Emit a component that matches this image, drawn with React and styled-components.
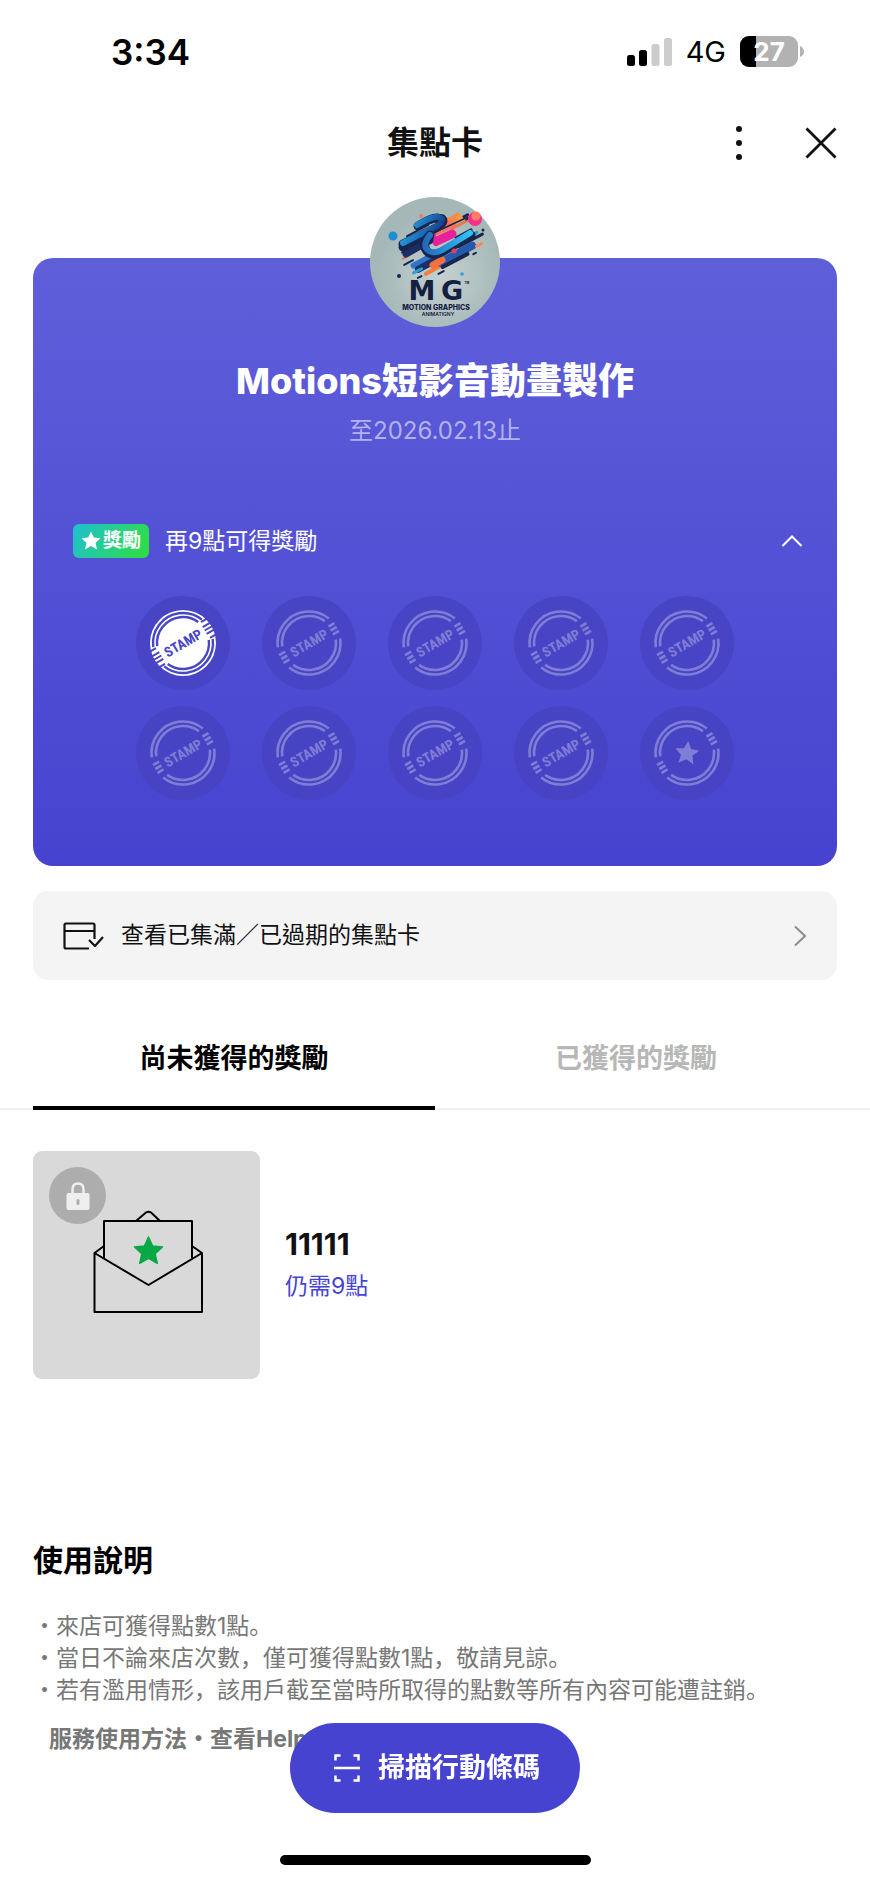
import React, { useState } from 'react';
import styled, { createGlobalStyle } from 'styled-components';

const GlobalStyle = createGlobalStyle`
  * {
    box-sizing: border-box;
  }

  body {
    margin: 0;
    background: #fff;
    color: #111;
    font-family: Inter, "Noto Sans CJK TC", sans-serif;
    line-height: 1.2;
  }

  button {
    border: 0;
    padding: 0;
    background: none;
    color: inherit;
    font: inherit;
    cursor: pointer;
  }

  svg {
    display: block;
    flex: none;
  }
`;

const Page = styled.div`
  padding-bottom: 128px;
`;

const StatusBar = styled.div`
  display: flex;
  align-items: center;
  justify-content: space-between;
  height: 104px;
  padding: 0 66px 0 111px;
`;

const Clock = styled.span`
  color: #000;
  font-size: 35px;
  font-weight: 600;
`;

const StatusIcons = styled.div`
  display: flex;
  align-items: center;
  gap: 14px;
  color: #000;
  font-size: 29px;
`;

const Header = styled.header`
  display: grid;
  grid-template-columns: 1fr auto 1fr;
  align-items: center;
  height: 77px;
  padding: 0 33px;
`;

const HeaderTitle = styled.h1`
  grid-column: 2;
  margin: 0;
  font-size: 32px;
  font-weight: 700;
  line-height: 40px;
`;

const HeaderActions = styled.div`
  display: flex;
  align-items: center;
  justify-content: flex-end;
  gap: 62px;
`;

const Card = styled.section`
  display: flex;
  flex-direction: column;
  align-items: center;
  margin: 77px 33px 0;
  padding: 0 34px 66px 40px;
  border-radius: 20px;
  background: linear-gradient(#5f5fda, #4643d0);
  color: #fff;
`;

const Avatar = styled.svg`
  width: 130px;
  height: 130px;
  margin: -61px 0 31px -6px;
`;

const ShopName = styled.h2`
  margin: 0 0 0 -6px;
  font-size: 36px;
  font-weight: 800;
  line-height: 46px;
`;

const Expiry = styled.p`
  margin: 11px 0 0 -6px;
  color: #b3b2ee;
  font-size: 24px;
  line-height: 32px;
`;

const RewardToggle = styled.button`
  display: flex;
  align-items: center;
  width: 100%;
  margin: 77px 0 38px;
  font-size: 23px;
  line-height: 34px;
`;

const Badge = styled.span`
  display: flex;
  align-items: center;
  gap: 2px;
  height: 34px;
  margin-right: 16px;
  padding: 0 8px;
  border-radius: 6px;
  background: linear-gradient(120deg, #20bfd2, #2ee03c);
  font-size: 19px;
  font-weight: 700;
`;

const ToggleArrow = styled.svg`
  margin-left: auto;
`;

const StampGrid = styled.div`
  display: grid;
  grid-template-columns: repeat(5, 94px);
  gap: 16px 32px;
  margin-left: -6px;
`;

const StampSlot = styled.svg`
  width: 94px;
  height: 94px;
`;

const HistoryLink = styled.a`
  display: flex;
  align-items: center;
  height: 89px;
  margin: 25px 33px 0;
  padding: 0 30px;
  border-radius: 15px;
  background: #f4f4f4;
  color: #111;
  font-size: 23px;
  text-decoration: none;

  svg:last-child {
    margin-left: auto;
  }
`;

const HistoryText = styled.span`
  margin-left: 16px;
`;

const Tabs = styled.div`
  display: flex;
  margin-top: 48px;
  padding: 0 33px;
  box-shadow: inset 0 -2px #efefef;
`;

const Tab = styled.button`
  flex: 1;
  height: 82px;
  padding-bottom: 16px;
  border-bottom: 4px solid ${({ $active }) => ($active ? '#000' : 'transparent')};
  color: ${({ $active }) => ($active ? '#000' : '#b7b7b7')};
  font-size: 27px;
  font-weight: 700;
`;

const RewardRow = styled.section`
  display: flex;
  align-items: center;
  gap: 25px;
  margin: 41px 33px 0;
`;

const Thumb = styled.div`
  position: relative;
  display: flex;
  align-items: center;
  justify-content: center;
  width: 227px;
  height: 228px;
  padding: 0 0 6px 4px;
  border-radius: 9px;
  background: #d9d9d9;
`;

const LockBadge = styled.span`
  position: absolute;
  top: 16px;
  left: 16px;
  display: flex;
  align-items: center;
  justify-content: center;
  width: 57px;
  height: 57px;
  border-radius: 50%;
  background: #adadad;
`;

const RewardName = styled.h3`
  margin: 0 0 8px;
  font-size: 30px;
  font-weight: 700;
  line-height: 34px;
`;

const RewardNeed = styled.p`
  margin: 0;
  color: #4643d0;
  font-size: 23px;
  line-height: 34px;
`;

const Guide = styled.section`
  margin: 160px 33px 0;
  color: #777;
  font-size: 23px;
`;

const GuideTitle = styled.h2`
  margin: 0 0 29px;
  color: #000;
  font-size: 30px;
  font-weight: 700;
  line-height: 42px;
`;

const GuideList = styled.ul`
  margin: 0;
  padding: 0;
  list-style: none;
  font-family: Inter, "Noto Sans CJK SC", sans-serif;
  line-height: 32px;
`;

const HelpLink = styled.a`
  display: inline-block;
  margin: 16px 0 0 16px;
  color: #777;
  font-weight: 700;
  line-height: 34px;
  text-decoration: none;
`;

const BottomBar = styled.div`
  position: fixed;
  right: 0;
  bottom: 0;
  left: 0;
  display: flex;
  flex-direction: column;
  align-items: center;
  gap: 42px;
  padding-bottom: 17px;
`;

const ScanButton = styled.button`
  display: flex;
  align-items: center;
  gap: 18px;
  height: 90px;
  padding: 0 40px 0 44px;
  border-radius: 45px;
  background: #4643d0;
  color: #fff;
  font-size: 27px;
  font-weight: 700;
`;

const HomeIndicator = styled.div`
  width: 311px;
  height: 10px;
  border-radius: 5px;
  background: #000;
`;

const STAR = 'M0 -10 L3 -3.6 L10 -2.9 L4.8 1.9 L6.3 8.9 L0 5.3 L-6.3 8.9 L-4.8 1.9 L-10 -2.9 L-3 -3.6 Z';

const Signal = () => (
  <svg width="45" height="28" viewBox="0 0 45 28" role="img" aria-label="signal">
    <rect x="0" y="17" width="8" height="11" rx="2.5" fill="#000" />
    <rect x="12" y="12" width="8" height="16" rx="2.5" fill="#000" />
    <rect x="24.5" y="6" width="8" height="22" rx="2.5" fill="#ccc" />
    <rect x="37" y="0" width="8" height="28" rx="2.5" fill="#ccc" />
  </svg>
);

const Battery = () => (
  <svg width="64" height="31" viewBox="0 0 64 31">
    <clipPath id="battery">
      <rect width="58" height="31" rx="9" />
    </clipPath>
    <g clipPath="url(#battery)">
      <rect width="58" height="31" fill="#b2b2b2" />
      <rect width="16" height="31" fill="#000" />
    </g>
    <path d="M60 10 Q64 12 64 15.5 Q64 19 60 21 Z" fill="#b2b2b2" />
    <text x="29" y="25" textAnchor="middle" fill="#fff" fontSize="26" fontWeight="700">27</text>
  </svg>
);

// streaks are drawn flat and turned as one group
const streaks = [
  [-22, -21, 26, 2, '#17264f'], [10, -22, 12, 2, '#17264f'], [-30, -16, 8, 2, '#2a9fd6'],
  [-34, -9, 8, 2, '#17264f'], [-36, -3, 9, 2, '#f0764a'], [-38, 3, 12, 2, '#17264f'],
  [-32, 6, 28, 6, '#2f74c9'], [-30, 11, 30, 7, '#1b2f66'], [-34, 14, 12, 3, '#2a9fd6'],
  [-24, 20, 28, 4, '#f57c3c'], [-32, 21, 6, 2, '#17264f'], [-8, 15, 44, 8, '#2459ad'],
  [-6, 22, 32, 4, '#17264f'], [20, 3, 20, 3, '#17264f'], [28, 8, 16, 3, '#2a9fd6'],
  [18, 12, 30, 3, '#17264f'], [34, 20, 9, 3, '#f58a5a'], [12, -17, 24, 3, '#f58a42'],
  [16, -12, 28, 3, '#17264f'], [20, -7, 24, 3, '#f0764a'], [-12, 27, 8, 2, '#17264f'],
  [28, 26, 5, 2, '#17264f'], [38, -8, 6, 2, '#17264f'],
];

const ShopLogo = () => (
  <Avatar viewBox="0 0 130 130" role="img" aria-label="MG Motion Graphics">
    <defs>
      <radialGradient id="logoBg" cx="55%" cy="60%">
        <stop offset="0" stopColor="#c5d0d0" />
        <stop offset="1" stopColor="#a5b7b7" />
      </radialGradient>
      <linearGradient id="blue" x2="1" y2="0.4">
        <stop offset="0" stopColor="#35b4ec" />
        <stop offset="0.6" stopColor="#1872bd" />
        <stop offset="1" stopColor="#1c3a80" />
      </linearGradient>
      <linearGradient id="cyan">
        <stop offset="0" stopColor="#2269bd" />
        <stop offset="1" stopColor="#2fc4f3" />
      </linearGradient>
      <linearGradient id="hot" y1="1" y2="0">
        <stop offset="0" stopColor="#e5189a" />
        <stop offset="1" stopColor="#ff9a3c" />
      </linearGradient>
    </defs>
    <circle cx="65" cy="65" r="65" fill="url(#logoBg)" />
    <g transform="translate(65 47) rotate(-28)">
      {streaks.map(([x, y, w, h, fill]) => (
        <rect key={`${x},${y}`} x={x} y={y} width={w} height={h} rx={h / 2} fill={fill} />
      ))}
    </g>
    <path d="M66 46 Q59 36 70 31 L90 21" fill="none" stroke="url(#hot)" strokeWidth="6" strokeLinecap="round" />
    <path d="M67 44 L82 37" stroke="#e8209a" strokeWidth="9" strokeLinecap="round" />
    <path d="M68 36 L84 28" stroke="#ff6f5c" strokeWidth="4" strokeLinecap="round" />
    <path d="M72 32 L98 20" stroke="#17264f" strokeWidth="1.5" strokeLinecap="round" />
    <path d="M63 68 L72 63" stroke="#f5703c" strokeWidth="7" strokeLinecap="round" />
    <path d="M36 57 L54 47" stroke="#1b2f66" strokeWidth="7" strokeLinecap="round" />
    <path d="M33 50 L53 40 Q59 38 59 43" fill="none" stroke="#17264f" strokeWidth="9" strokeLinecap="round" />
    <path d="M33 47 L68 30 Q78 22 68 21 Q62 20 48 29" fill="none" stroke="#17264f" strokeWidth="9" strokeLinecap="round" />
    <path d="M33 46 L67 29 Q77 22 68 20 Q62 19 47 28" fill="none" stroke="url(#blue)" strokeWidth="6" strokeLinecap="round" />
    <path d="M60 38 Q50 49 59 56 Q64 59 72 55 L101 38" fill="none" stroke="#17264f" strokeWidth="9" strokeLinecap="round" />
    <path d="M60 38 Q51 49 59 54 Q64 57 72 53 L100 36" fill="none" stroke="url(#cyan)" strokeWidth="6" strokeLinecap="round" />
    <circle cx="105" cy="22" r="7" fill="#f5308c" />
    <circle cx="106" cy="19" r="4.5" fill="#ff7d68" />
    <circle cx="23" cy="39" r="4.5" fill="#1d8ed2" />
    <circle cx="84" cy="54" r="2.5" fill="#e33c5c" />
    <circle cx="29" cy="79" r="2" fill="#17264f" />
    <circle cx="92" cy="77" r="1.8" fill="#2a9fd6" />
    <circle cx="51" cy="19" r="2" fill="#e77e68" />
    <circle cx="113" cy="33" r="1.5" fill="#17264f" />
    <g fill="#132042" textAnchor="middle">
      <text x="52" y="103" fontSize="27" fontWeight="700" fontFamily="DejaVu Sans, sans-serif">M</text>
      <text x="82" y="103" fontSize="27" fontWeight="700" fontFamily="DejaVu Sans, sans-serif">G</text>
      <text x="97" y="87" fontSize="3" fontWeight="700">TM</text>
      <text x="66" y="113" fontSize="7" fontWeight="800">MOTION GRAPHICS</text>
      <text x="68" y="119" fontSize="5" fontWeight="600">ANIMATIGNY</text>
    </g>
  </Avatar>
);

const StampLabel = ({ fill }) => (
  <text
    y="5"
    transform="rotate(-30)"
    textAnchor="middle"
    fill={fill}
    fontFamily="'Liberation Sans Narrow', 'Roboto Condensed', 'Open Sans Condensed', 'Liberation Sans'"
    fontSize="14"
    fontWeight="700"
  >
    STAMP
  </text>
);

const Arcs = ({ outer, inner, stroke, width }) => (
  <g fill="none" stroke={stroke} strokeWidth={width}>
    {[0, 180].map((turn) => (
      <g key={turn} transform={`rotate(${turn})`}>
        <circle r={outer} pathLength="360" strokeDasharray="137 223" transform="rotate(172)" />
        <circle r={inner} pathLength="360" strokeDasharray="133 227" transform="rotate(173)" />
      </g>
    ))}
  </g>
);

const Stamp = ({ filled, goal }) => (
  <StampSlot viewBox="-47 -47 94 94" role="img" aria-label={filled ? 'stamped' : 'empty'}>
    <circle r="47" fill="#4643c2" opacity="0.85" />
    {filled ? (
      <>
        <circle r="33" fill="#fff" />
        <Arcs outer="30" inner="26" stroke="#4946c6" width="2.4" />
        <path
          d="M-34 -9 H-26 M-34 -4 H-25 M-34 0 H-25 M-34 4 H-25 M-33 9 H-26 M34 9 H26 M34 4 H25 M34 0 H25 M34 -4 H25 M33 -9 H26"
          transform="rotate(-30)"
          stroke="#4946c6"
          strokeWidth="2"
        />
        <StampLabel fill="#4946c6" />
      </>
    ) : (
      <>
        <Arcs outer="31.5" inner="27" stroke="#7f7dd6" width="2.6" />
        <path
          d="M-32 -4.5 H-25 M-32 0 H-25 M-32 4.5 H-25 M25 -4.5 H32 M25 0 H32 M25 4.5 H32"
          transform="rotate(-30)"
          stroke="#7f7dd6"
          strokeWidth="2.6"
        />
        {goal ? <path d={STAR} transform="rotate(6) scale(1.2)" fill="#7f7dd6" /> : <StampLabel fill="#7f7dd6" />}
      </>
    )}
  </StampSlot>
);

const Envelope = () => (
  <svg width="111" height="104" viewBox="0 0 111 104" fill="none" stroke="#000" strokeWidth="2" strokeLinejoin="round">
    <path d="M1.5 43 V102 H109 V43 L55.5 75 Z" />
    <path d="M11 48 V11 H99 V48" />
    <path d="M43 11 L53 2.5 Q55.5 1 58 2.5 L67 11" />
    <path d="M1.5 43 L11 36 M109 43 L99 36" />
    <path d={STAR} transform="translate(55.5 41) scale(1.4)" fill="#07a845" stroke="#07a845" strokeWidth="1" />
  </svg>
);

const notes = [
  '來店可獲得點數1點。',
  '當日不論來店次數，僅可獲得點數1點，敬請見諒。',
  '若有濫用情形，該用戶截至當時所取得的點數等所有內容可能遭註銷。',
];

const tabs = ['尚未獲得的獎勵', '已獲得的獎勵'];
const stamps = Array.from({ length: 10 }, (_, i) => i);

const App = () => {
  const [tab, setTab] = useState(0);
  const [open, setOpen] = useState(true);

  return (
    <Page>
      <GlobalStyle />
      <StatusBar>
        <Clock>3:34</Clock>
        <StatusIcons>
          <Signal />
          <span>4G</span>
          <Battery />
        </StatusIcons>
      </StatusBar>

      <Header>
        <HeaderTitle>集點卡</HeaderTitle>
        <HeaderActions>
          <button type="button" aria-label="選單">
            <svg width="8" height="36" viewBox="0 0 8 36" fill="#111">
              <circle cx="4" cy="4" r="3" />
              <circle cx="4" cy="18" r="3" />
              <circle cx="4" cy="32" r="3" />
            </svg>
          </button>
          <button type="button" aria-label="關閉">
            <svg width="32" height="32" viewBox="0 0 32 32" stroke="#111" strokeWidth="2.8">
              <path d="M1.5 1.5 L30.5 30.5 M30.5 1.5 L1.5 30.5" />
            </svg>
          </button>
        </HeaderActions>
      </Header>

      <Card>
        <ShopLogo />
        <ShopName>Motions短影音動畫製作</ShopName>
        <Expiry>至2026.02.13止</Expiry>
        <RewardToggle type="button" aria-expanded={open} onClick={() => setOpen(!open)}>
          <Badge>
            <svg width="20" height="20" viewBox="-10.5 -10.5 21 21" fill="#fff">
              <path d={STAR} />
            </svg>
            獎勵
          </Badge>
          再9點可得獎勵
          <ToggleArrow width="22" height="14" viewBox="0 0 22 14" fill="none" stroke="#fff" strokeWidth="2">
            <path d={open ? 'M1.5 12 L11 2.5 L20.5 12' : 'M1.5 2 L11 11.5 L20.5 2'} />
          </ToggleArrow>
        </RewardToggle>
        {open && (
          <StampGrid>
            {stamps.map((i) => (
              <Stamp key={i} filled={i === 0} goal={i === 9} />
            ))}
          </StampGrid>
        )}
      </Card>

      <HistoryLink href="#history">
        <svg width="42" height="28" viewBox="0 0 42 28" fill="none" stroke="#111" strokeWidth="2.2" strokeLinejoin="round">
          <path d="M26 26.5 H3 Q1.5 26.5 1.5 25 V3 Q1.5 1.5 3 1.5 H30 Q31.5 1.5 31.5 3 V17 M1.5 9 H31.5" />
          <path d="M26 18 L32 24 L40 15" />
        </svg>
        <HistoryText>查看已集滿／已過期的集點卡</HistoryText>
        <svg width="14" height="22" viewBox="0 0 14 22" fill="none" stroke="#8b8b8b" strokeWidth="2">
          <path d="M2 1.5 L12 11 L2 20.5" />
        </svg>
      </HistoryLink>

      <Tabs role="tablist">
        {tabs.map((label, i) => (
          <Tab key={label} type="button" role="tab" aria-selected={tab === i} $active={tab === i} onClick={() => setTab(i)}>
            {label}
          </Tab>
        ))}
      </Tabs>

      <RewardRow>
        <Thumb>
          <Envelope />
          <LockBadge>
            <svg width="24" height="28" viewBox="0 0 24 28">
              <path d="M6.5 12 V7.5 Q6.5 1.5 12 1.5 Q17.5 1.5 17.5 7.5 V12" fill="none" stroke="#efefef" strokeWidth="2.5" />
              <rect x="0.5" y="11" width="23" height="17" rx="2" fill="#efefef" />
              <rect x="10.5" y="17" width="3" height="6" rx="1.5" fill="#adadad" />
            </svg>
          </LockBadge>
        </Thumb>
        <div>
          <RewardName>11111</RewardName>
          <RewardNeed>仍需9點</RewardNeed>
        </div>
      </RewardRow>

      <Guide>
        <GuideTitle>使用說明</GuideTitle>
        <GuideList>
          {notes.map((note) => (
            <li key={note}>・{note}</li>
          ))}
        </GuideList>
        <HelpLink href="#help">服務使用方法・查看Help</HelpLink>
      </Guide>

      <BottomBar>
        <ScanButton type="button">
          <svg width="26" height="28" viewBox="0 0 26 28" fill="none" stroke="#fff" strokeWidth="2.5">
            <path d="M1.5 6.5 V1.5 H6.5 M19.5 1.5 H24.5 V6.5 M24.5 21.5 V26.5 H19.5 M6.5 26.5 H1.5 V21.5 M0 14 H26" />
          </svg>
          掃描行動條碼
        </ScanButton>
        <HomeIndicator />
      </BottomBar>
    </Page>
  );
};

export default App;
